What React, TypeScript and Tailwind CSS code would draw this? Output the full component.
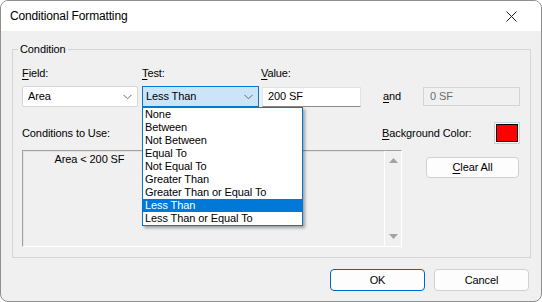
import React from 'react';

const font = { fontFamily: '"Liberation Sans", Arial, sans-serif' };

const testOptions = [
    'None',
    'Between',
    'Not Between',
    'Equal To',
    'Not Equal To',
    'Greater Than',
    'Greater Than or Equal To',
    'Less Than',
    'Less Than or Equal To',
];

const Chevron = () => (
    <svg width="9" height="6" viewBox="0 0 9 6" className="shrink-0">
        <path d="M0.5 0.8 L4.5 4.8 L8.5 0.8" fill="none" stroke="#6b6b6b" strokeWidth="1" />
    </svg>
);

const Key = ({ children }: { children: React.ReactNode }) => <span className="underline underline-offset-2">{children}</span>;

export default function App() {
    const selected = 'Less Than';

    return (
        <div className="w-[542px] h-[302px] bg-white text-[11px] tracking-[-0.1px] text-black leading-none" style={font}>
            <div className="w-full h-full flex flex-col rounded-[8px] border border-[#8f8f8f] overflow-hidden bg-[#f0f0f0]">
                {/* Title bar */}
                <div className="h-[30px] shrink-0 bg-white flex items-center justify-between pl-[9px] pr-[24px]">
                    <span className="text-[12px] tracking-[-0.15px]">Conditional Formatting</span>
                    <svg width="11" height="11" viewBox="0 0 11 11">
                        <path d="M0.5 0.5 L10.5 10.5 M10.5 0.5 L0.5 10.5" stroke="#1a1a1a" strokeWidth="1" />
                    </svg>
                </div>

                {/* Body */}
                <div className="flex-1 flex flex-col px-[11px] pt-[11px]">
                    <fieldset className="border border-[#d5d5d5] pl-[9px] pr-[10px] pb-[8px] h-[216px]">
                        <legend className="-ml-[4px] px-[2px] leading-[14px]">Condition</legend>

                        <div className="flex items-center h-[14px] mt-[10px]">
                            <span className="w-[120px]"><Key>F</Key>ield:</span>
                            <span className="w-[119px]"><Key>T</Key>est:</span>
                            <span><Key>V</Key>alue:</span>
                        </div>

                        <div className="flex items-center mt-[6px] h-[21px]">
                            <div className="w-[116px] h-[21px] bg-white border border-[#d6d6d6] rounded-[2px] flex items-center justify-between pl-[5px] pr-[5px]">
                                <span>Area</span>
                                <Chevron />
                            </div>
                            <div className="relative ml-[4px]">
                                <div className="w-[117px] h-[21px] bg-[#cce4f7] border border-[#0078d7] flex items-center justify-between pl-[3px] pr-[5px]">
                                    <span>Less Than</span>
                                    <Chevron />
                                </div>
                                {/* Open dropdown list */}
                                <div className="absolute left-0 top-[21px] z-10 w-[161px] bg-white border border-[#0078d7] shadow-[2px_2px_3px_rgba(0,0,0,0.35)]">
                                    {testOptions.map((opt) => (
                                        <div
                                            key={opt}
                                            className={`h-[13px] leading-[13px] px-[2px] whitespace-nowrap ${opt === selected ? 'bg-[#0078d7] text-white' : ''}`}
                                        >
                                            {opt}
                                        </div>
                                    ))}
                                </div>
                            </div>
                            <div className="ml-[3px] w-[99px] h-[20px] bg-white border border-[#e3e3e3] border-b-[#8a8a8a] flex items-center px-[5px]">
                                200 SF
                            </div>
                            <span className="ml-[22px] w-[40px]"><Key>a</Key>nd</span>
                            <div className="w-[97px] h-[19px] bg-[#f0f0f0] border border-[#d4d4d4] flex items-center px-[6px] text-[#6d6d6d]">
                                0 SF
                            </div>
                        </div>

                        <div className="flex items-center mt-[15px] h-[22px]">
                            <span className="w-[360px]">Conditions to Use:</span>
                            <span className="w-[112px]"><Key>B</Key>ackground Color:</span>
                            <div className="w-[26px] h-[22px] border border-[#d0d0d0] bg-white p-[1px]">
                                <div className="w-full h-full border border-black bg-[#ff0000]" />
                            </div>
                        </div>

                        <div className="flex items-start mt-[6px]">
                            <div className="w-[380px] h-[97px] flex border-t border-l border-[#a0a0a0] border-b-white border-r-white border-b border-r">
                                <div className="flex-1 border-t border-l border-[#e3e3e3]">
                                    <div className="w-[131px] text-center leading-[13px] pt-[1px]">Area &lt; 200 SF</div>
                                </div>
                                <div className="w-[17px] border-l border-white flex flex-col items-center justify-between py-[7px]">
                                    <svg width="9" height="5" viewBox="0 0 9 5"><path d="M4.5 0 L9 5 L0 5 Z" fill="#a3a3a3" /></svg>
                                    <svg width="9" height="5" viewBox="0 0 9 5"><path d="M0 0 L9 0 L4.5 5 Z" fill="#a3a3a3" /></svg>
                                </div>
                            </div>
                            <div className="ml-[24px] mt-[7px] w-[93px] h-[21px] bg-[#fdfdfd] border border-[#d0d0d0] rounded-[4px] flex items-center justify-center">
                                <span><Key>C</Key>lear All</span>
                            </div>
                        </div>
                    </fieldset>

                    <div className="flex justify-end gap-[9px] mt-[11px] pr-[1px]">
                        <div className="w-[95px] h-[22px] bg-[#fdfdfd] border border-[#0067c0] rounded-[4px] flex items-center justify-center">OK</div>
                        <div className="w-[95px] h-[22px] bg-[#fdfdfd] border border-[#d0d0d0] rounded-[4px] flex items-center justify-center">Cancel</div>
                    </div>
                </div>
            </div>
        </div>
    );
}
